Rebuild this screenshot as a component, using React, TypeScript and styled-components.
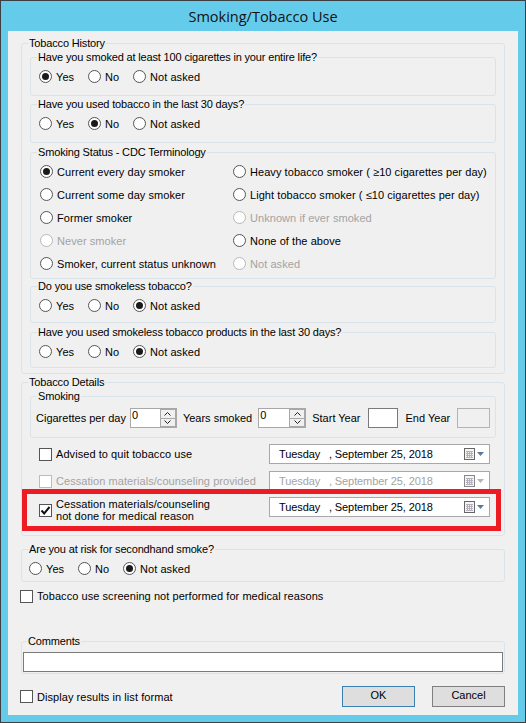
import React from "react";
import styled, { createGlobalStyle } from "styled-components";

const GlobalStyle = createGlobalStyle`
  html, body {
    margin: 0;
    padding: 0;
    background: #65cbeb;
  }
  * {
    box-sizing: border-box;
  }
`;

const Window = styled.div`
  width: 526px;
  height: 723px;
  background: #65cbeb;
  border: 1px solid #3c4043;
  padding: 0 7px 7px;
  display: flex;
  flex-direction: column;
  font-family: "Liberation Sans", Arial, sans-serif;
  font-size: 11px;
  color: #000;
`;

const TitleBar = styled.div`
  height: 30px;
  flex: none;
  display: flex;
  align-items: center;
  justify-content: center;
  font-family: "Open Sans", sans-serif;
  font-size: 14.5px;
  color: #111;
`;

const Content = styled.div`
  flex: 1;
  background: #f0f0f0;
  padding: 5px 13px 0;
  display: flex;
  flex-direction: column;
`;

const Group = styled.fieldset<{ $h: number; $top?: number; $inset?: number }>`
  height: ${(p) => p.$h}px;
  margin: ${(p) => p.$top ?? 0}px ${(p) => p.$inset ?? 0}px 0;
  padding: 0;
  border: 1px solid #d9e4ea;
  border-radius: 3px;
  min-width: 0;
`;

const Legend = styled.legend<{ $ml?: number }>`
  padding: 0 1px;
  margin-left: ${(p) => p.$ml ?? 6}px;
  height: 14px;
  line-height: 14px;
  white-space: nowrap;
  letter-spacing: -0.16px;
`;

const GroupBody = styled.div<{ $pad: number }>`
  padding: 0 ${(p) => p.$pad}px;
`;

const OptionRow = styled.div<{ $left?: number }>`
  display: flex;
  align-items: center;
  height: 23px;
  margin-top: 1px;
  padding-left: ${(p) => p.$left ?? 8}px;
`;

const OptionGrid = styled.div`
  display: grid;
  grid-template-columns: 193px 1fr;
  grid-auto-rows: 23px;
  margin-top: 1px;
  padding-left: 9px;
  align-items: center;
`;

const Option = styled.span<{ $w?: number; $off?: boolean }>`
  display: flex;
  align-items: center;
  gap: 4px;
  width: ${(p) => (p.$w ? `${p.$w}px` : "auto")};
  color: ${(p) => (p.$off ? "#a3a3a3" : "#000")};
  white-space: nowrap;
  letter-spacing: 0.06px;
`;

const RadioDot = styled.span<{ $on?: boolean; $off?: boolean }>`
  width: 13px;
  height: 13px;
  flex: none;
  border-radius: 50%;
  border: 1px solid ${(p) => (p.$off ? "#b8b8b8" : "#555")};
  background: #fff;
  display: flex;
  align-items: center;
  justify-content: center;
  &::after {
    content: "";
    display: ${(p) => (p.$on ? "block" : "none")};
    width: 7px;
    height: 7px;
    border-radius: 50%;
    background: #1a1a1a;
  }
`;

const Radio = ({ label, on, off, w }: { label: string; on?: boolean; off?: boolean; w?: number }) => (
  <Option $w={w} $off={off}>
    <RadioDot $on={on} $off={off} />
    {label}
  </Option>
);

const YesNo = ({ value, left }: { value: "yes" | "no" | "na"; left?: number }) => (
  <OptionRow $left={left}>
    <Radio label="Yes" w={49} on={value === "yes"} />
    <Radio label="No" w={45} on={value === "no"} />
    <Radio label="Not asked" on={value === "na"} />
  </OptionRow>
);

const Box = styled.span<{ $off?: boolean }>`
  width: 13px;
  height: 13px;
  flex: none;
  border: 1px solid ${(p) => (p.$off ? "#bcbcbc" : "#555")};
  background: #fff;
  display: flex;
  align-items: center;
  justify-content: center;
`;

const CheckText = styled.span`
  line-height: 12px;
`;

const Check = ({ label, on, off }: { label: React.ReactNode; on?: boolean; off?: boolean }) => (
  <Option $off={off}>
    <Box $off={off}>
      {on && (
        <svg width="11" height="11" viewBox="0 0 11 11">
          <path d="M1.5 5.5 L4.2 8.5 L9.5 2" fill="none" stroke="#111" strokeWidth="2" />
        </svg>
      )}
    </Box>
    <CheckText>{label}</CheckText>
  </Option>
);

const FieldLabel = styled.span`
  white-space: nowrap;
`;

const SmokingRow = styled.div`
  display: flex;
  align-items: center;
  height: 20px;
  margin-top: 5px;
  padding-left: 5px;
`;

const Spinner = styled.div<{ $ml: number; $w: number }>`
  width: ${(p) => p.$w}px;
  height: 20px;
  margin-left: ${(p) => p.$ml}px;
  margin-right: 6px;
  flex: none;
  display: flex;
  border: 1px solid #a8a8a8;
  background: #fff;
  padding-left: 1px;
  line-height: 13px;
`;

const SpinValue = styled.span`
  flex: 1;
`;

const SpinArrows = styled.div`
  width: 16px;
  flex: none;
  display: flex;
  flex-direction: column;
  gap: 1px;
  padding: 1px;
  background: #a8a8a8;
`;

const SpinButton = styled.div`
  flex: 1;
  background: #f0f0f0;
  display: flex;
  align-items: center;
  justify-content: center;
`;

const YearBox = styled.div<{ $off?: boolean; $ml: number; $mr?: number; $w: number }>`
  width: ${(p) => p.$w}px;
  height: 20px;
  margin-left: ${(p) => p.$ml}px;
  margin-right: ${(p) => p.$mr ?? 0}px;
  flex: none;
  border: 1px solid ${(p) => (p.$off ? "#b4b4b4" : "#7a7a7a")};
  background: ${(p) => (p.$off ? "#f0f0f0" : "#fff")};
`;

const DetailRow = styled.div<{ $top: number }>`
  display: flex;
  align-items: center;
  justify-content: space-between;
  height: 20px;
  margin-top: ${(p) => p.$top}px;
  padding: 0 14px 0 17px;
`;

const HighlightBox = styled.div`
  position: relative;
  height: 42px;
  margin: -2px 3px 0 0;
  border: 5px solid #ed1c24;
  display: flex;
  align-items: center;
  justify-content: space-between;
  padding: 0 6px 0 12px;
`;

const HighlightDate = styled.div`
  align-self: flex-start;
  margin-top: 3px;
`;

const DateBox = styled.div<{ $off?: boolean }>`
  width: 221px;
  height: 20px;
  flex: none;
  border: 1px solid #a8a8a8;
  background: #fff;
  display: flex;
  align-items: center;
  padding: 0 4px 0 9px;
  color: ${(p) => (p.$off ? "#a3a3a3" : "#000")};
  white-space: pre;
`;

const DateText = styled.span`
  flex: 1;
  letter-spacing: -0.1px;
`;

const CalendarIcon = ({ off }: { off?: boolean }) => (
  <svg width="21" height="12" viewBox="0 0 21 12">
    <rect x="0.5" y="0.5" width="10" height="11" fill="#f4f4f4" stroke={off ? "#888" : "#666"} />
    <path d="M2 3.5H9M2 5.5H9M2 7.5H9M2 9.5H9M3.5 3V10M5.5 3V10M7.5 3V10" stroke="#b5b0bb" strokeWidth="1" />
    <path d="M13 4H20L16.5 8Z" fill={off ? "#b5b5b5" : "#5a7a98"} />
  </svg>
);

const ScreeningRow = styled.div`
  height: 14px;
  margin: 7px 0 0 -1px;
  display: flex;
  align-items: center;
`;

const CommentInput = styled.div`
  height: 20px;
  margin-top: 4px;
  border: 1px solid #7a7a7a;
  background: #fff;
`;

const Footer = styled.div`
  display: flex;
  align-items: center;
  height: 21px;
  margin: 12px 0 0 -1px;
`;

const Spacer = styled.div`
  flex: 1;
`;

const DialogButton = styled.div<{ $primary?: boolean }>`
  width: 73px;
  height: 21px;
  margin-left: ${(p) => (p.$primary ? 0 : 17)}px;
  padding-bottom: 3px;
  border: 1px solid ${(p) => (p.$primary ? "#3c7fb1" : "#808080")};
  background: #dedede;
  display: flex;
  align-items: center;
  justify-content: center;
`;

const Chevron = ({ up }: { up?: boolean }) => (
  <svg width="7" height="4" viewBox="0 0 7 4">
    <path d={up ? "M0.5 3.5L3.5 0.5L6.5 3.5" : "M0.5 0.5L3.5 3.5L6.5 0.5"} fill="none" stroke="#222" />
  </svg>
);

const SpinBox = ({ ml, w }: { ml: number; w: number }) => (
  <Spinner $ml={ml} $w={w}>
    <SpinValue>0</SpinValue>
    <SpinArrows>
      <SpinButton>
        <Chevron up />
      </SpinButton>
      <SpinButton>
        <Chevron />
      </SpinButton>
    </SpinArrows>
  </Spinner>
);

const DatePick = ({ off }: { off?: boolean }) => (
  <DateBox $off={off}>
    <DateText>{"Tuesday   , September 25, 2018"}</DateText>
    <CalendarIcon off={off} />
  </DateBox>
);

export default function App() {
  return (
    <>
      <GlobalStyle />
      <Window>
        <TitleBar>Smoking/Tobacco Use</TitleBar>
        <Content>
          <Group $h={338}>
            <Legend>Tobacco History</Legend>
            <GroupBody $pad={8}>
              <Group $h={46}>
                <Legend>Have you smoked at least 100 cigarettes in your entire life?</Legend>
                <YesNo value="yes" />
              </Group>
              <Group $h={46} $top={1}>
                <Legend>Have you used tobacco in the last 30 days?</Legend>
                <YesNo value="no" />
              </Group>
              <Group $h={134} $top={2}>
                <Legend>Smoking Status - CDC Terminology</Legend>
                <OptionGrid>
                  <Radio label="Current every day smoker" on />
                  <Radio label="Heavy tobacco smoker ( ≥10 cigarettes per day)" />
                  <Radio label="Current some day smoker" />
                  <Radio label="Light tobacco smoker ( ≤10 cigarettes per day)" />
                  <Radio label="Former smoker" />
                  <Radio label="Unknown if ever smoked" off />
                  <Radio label="Never smoker" off />
                  <Radio label="None of the above" />
                  <Radio label="Smoker, current status unknown" />
                  <Radio label="Not asked" off />
                </OptionGrid>
              </Group>
              <Group $h={44}>
                <Legend>Do you use smokeless tobacco?</Legend>
                <YesNo value="na" />
              </Group>
              <Group $h={43} $top={2}>
                <Legend>Have you used smokeless tobacco products in the last 30 days?</Legend>
                <YesNo value="na" />
              </Group>
            </GroupBody>
          </Group>
          <Group $h={161} $top={1}>
            <Legend>Tobacco Details</Legend>
            <Group $h={49} $inset={8}>
              <Legend>Smoking</Legend>
              <SmokingRow>
                <FieldLabel>Cigarettes per day</FieldLabel>
                <SpinBox ml={4} w={47} />
                <FieldLabel>Years smoked</FieldLabel>
                <SpinBox ml={6} w={48} />
                <FieldLabel>Start Year</FieldLabel>
                <YearBox $ml={7} $mr={8} $w={30} />
                <FieldLabel>End Year</FieldLabel>
                <YearBox $ml={7} $w={33} $off />
              </SmokingRow>
            </Group>
            <DetailRow $top={6}>
              <Check label="Advised to quit tobacco use" />
              <DatePick />
            </DetailRow>
            <DetailRow $top={7}>
              <Check label="Cessation materials/counseling provided" off />
              <DatePick off />
            </DetailRow>
            <HighlightBox>
              <Check
                label={
                  <>
                    Cessation materials/counseling
                    <br />
                    not done for medical reason
                  </>
                }
                on
              />
              <HighlightDate>
                <DatePick />
              </HighlightDate>
            </HighlightBox>
          </Group>
          <Group $h={40} $top={6}>
            <Legend>Are you at risk for secondhand smoke?</Legend>
            <YesNo value="na" left={7} />
          </Group>
          <ScreeningRow>
            <Check label="Tobacco use screening not performed for medical reasons" />
          </ScreeningRow>
          <Group $h={40} $top={31}>
            <Legend $ml={5}>Comments</Legend>
            <GroupBody $pad={1}>
              <CommentInput />
            </GroupBody>
          </Group>
          <Footer>
            <Check label="Display results in list format" />
            <Spacer />
            <DialogButton $primary>OK</DialogButton>
            <DialogButton>Cancel</DialogButton>
          </Footer>
        </Content>
      </Window>
    </>
  );
}
